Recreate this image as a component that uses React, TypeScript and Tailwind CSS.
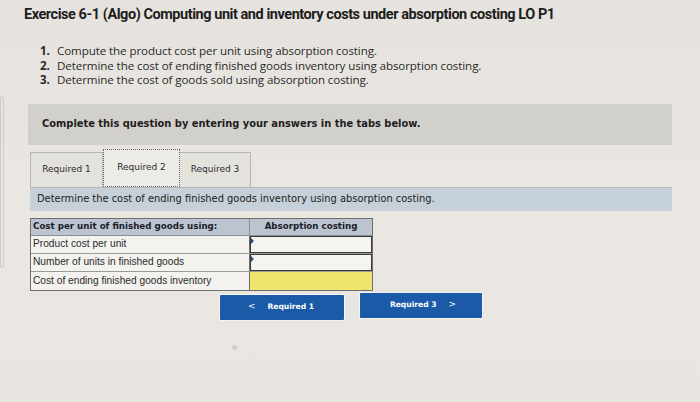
import React from "react";

export default function App() {
  const roboto = { fontFamily: "Roboto, 'Liberation Sans', sans-serif" };
  return (
    <div className="w-[700px] h-[402px] overflow-hidden bg-gradient-to-b from-[#e6e3de] via-[#eae7e2] to-[#e9e6e1] relative">
      <div className="absolute left-0 top-[96px] w-[4px] h-[172px] border border-[#cfccc6] rounded-r-[3px]" />
      <div
        className="pl-[24px] pt-[6px] text-[14.5px] font-bold text-[#1d1d1d] leading-[18px] tracking-[-0.45px]"
        style={roboto}
      >
        Exercise 6-1 (Algo) Computing unit and inventory costs under absorption costing LO P1
      </div>
      <ol
        className="mt-[20px] pl-[40px] text-[11.6px] leading-[14.5px] text-[#2a2a2a] tracking-[-0.1px]"
        style={{ fontFamily: "'Open Sans', 'Liberation Sans', sans-serif" }}
      >
        <li className="flex"><span className="w-[17px] font-bold">1.</span>Compute the product cost per unit using absorption costing.</li>
        <li className="flex"><span className="w-[17px] font-bold">2.</span>Determine the cost of ending finished goods inventory using absorption costing.</li>
        <li className="flex"><span className="w-[17px] font-bold">3.</span>Determine the cost of goods sold using absorption costing.</li>
      </ol>
      <div
        className="ml-[28px] mt-[16px] w-[644px] h-[41px] bg-[#d2d0cb] flex items-center pl-[14px] text-[9.9px] font-bold text-[#1e1e1e]"
        style={{ fontFamily: "'DejaVu Sans', Verdana, sans-serif" }}
      >
        Complete this question by entering your answers in the tabs below.
      </div>
      <div
        className="ml-[30px] mt-[4px] w-[642px]"
        style={{ fontFamily: "'DejaVu Sans', Verdana, sans-serif" }}
      >
        <div className="flex items-end h-[38px]">
          <div className="w-[73px] h-[35px] border border-[#b8b6b0] border-b-0 bg-[#e4e2dd] flex items-center justify-center text-[9px] text-[#2a2a2a]">
            Required 1
          </div>
          <div className="w-[77px] h-[38px] border border-dotted border-[#666] bg-[#ecebe6] flex items-center justify-center text-[9px] text-[#2a2a2a]">
            Required 2
          </div>
          <div className="w-[71px] h-[35px] border border-[#b8b6b0] border-b-0 border-l-0 bg-[#e4e2dd] flex items-center justify-center text-[9px] text-[#2a2a2a]">
            Required 3
          </div>
        </div>
        <div className="h-[24px] bg-[#c5d0d8] border-t border-[#aeb8bf] flex items-center pl-[7px] text-[9.9px] text-[#222]">
          Determine the cost of ending finished goods inventory using absorption costing.
        </div>
      </div>
      <div className="ml-[30px] mt-[7px] w-[343px] border border-[#6d6d6d] bg-[#f3f2ee]">
        <div className="flex h-[17px] bg-[#bcc4cf] border-b border-[#8a8f96]">
          <div
            className="w-[219px] border-r border-[#8a8f96] flex items-center pl-[2px] text-[8.7px] font-bold text-[#1b1b2b]"
            style={{ fontFamily: "'DejaVu Sans', Verdana, sans-serif" }}
          >
            Cost per unit of finished goods using:
          </div>
          <div
            className="flex-1 flex items-center justify-center text-[8.7px] font-bold text-[#1b1b2b]"
            style={{ fontFamily: "'DejaVu Sans', Verdana, sans-serif" }}
          >
            Absorption costing
          </div>
        </div>
        {[
          { label: "Product cost per unit", kind: "input" },
          { label: "Number of units in finished goods", kind: "input" },
          { label: "Cost of ending finished goods inventory", kind: "yellow" },
        ].map((r, i) => (
          <div key={i} className={`flex h-[18px] ${i < 2 ? "border-b border-[#9a9a9a]" : ""}`}>
            <div
              className="w-[219px] border-r border-[#6d6d6d] flex items-center pl-[2px] text-[10.2px] text-[#2b2b2b]"
              style={{ fontFamily: "'Liberation Sans', Arial, sans-serif" }}
            >
              {r.label}
            </div>
            <div className="flex-1 relative">
              {r.kind === "input" ? (
                <div className="absolute inset-0 border-[1.5px] border-[#3a3a3a] bg-[#f5f4f0]">
                  <div className="absolute left-0 top-[1px] w-0 h-0 border-t-[3px] border-b-[3px] border-l-[3px] border-t-transparent border-b-transparent border-l-[#2c4c8c]" />
                </div>
              ) : (
                <div className="absolute inset-0 bg-[#efe56e]" />
              )}
            </div>
          </div>
        ))}
      </div>
      <div
        className="flex mt-[4px] ml-[220px] gap-[16px]"
        style={{ fontFamily: "'DejaVu Sans', Verdana, sans-serif" }}
      >
        <div className="w-[124px] h-[25px] bg-[#1b5aa7] rounded-[1px] flex items-center justify-center text-white text-[7.6px] font-bold gap-[12px] pr-[2px] shadow-[0_0_0_1px_#f4f4f0]">
          <span className="text-[9px] font-normal">&lt;</span>
          <span>Required 1</span>
        </div>
        <div className="w-[122px] h-[25px] -mt-[2px] bg-[#1b5aa7] rounded-[1px] flex items-center justify-center text-white text-[7.6px] font-bold gap-[12px] pl-[4px] shadow-[0_0_0_1px_#f4f4f0]">
          <span>Required 3</span>
          <span className="text-[9px] font-normal">&gt;</span>
        </div>
      </div>
      <div className="absolute left-[232px] top-[345px] w-[5px] h-[5px] rounded-full bg-[#d3d0cb]" />
    </div>
  );
}
